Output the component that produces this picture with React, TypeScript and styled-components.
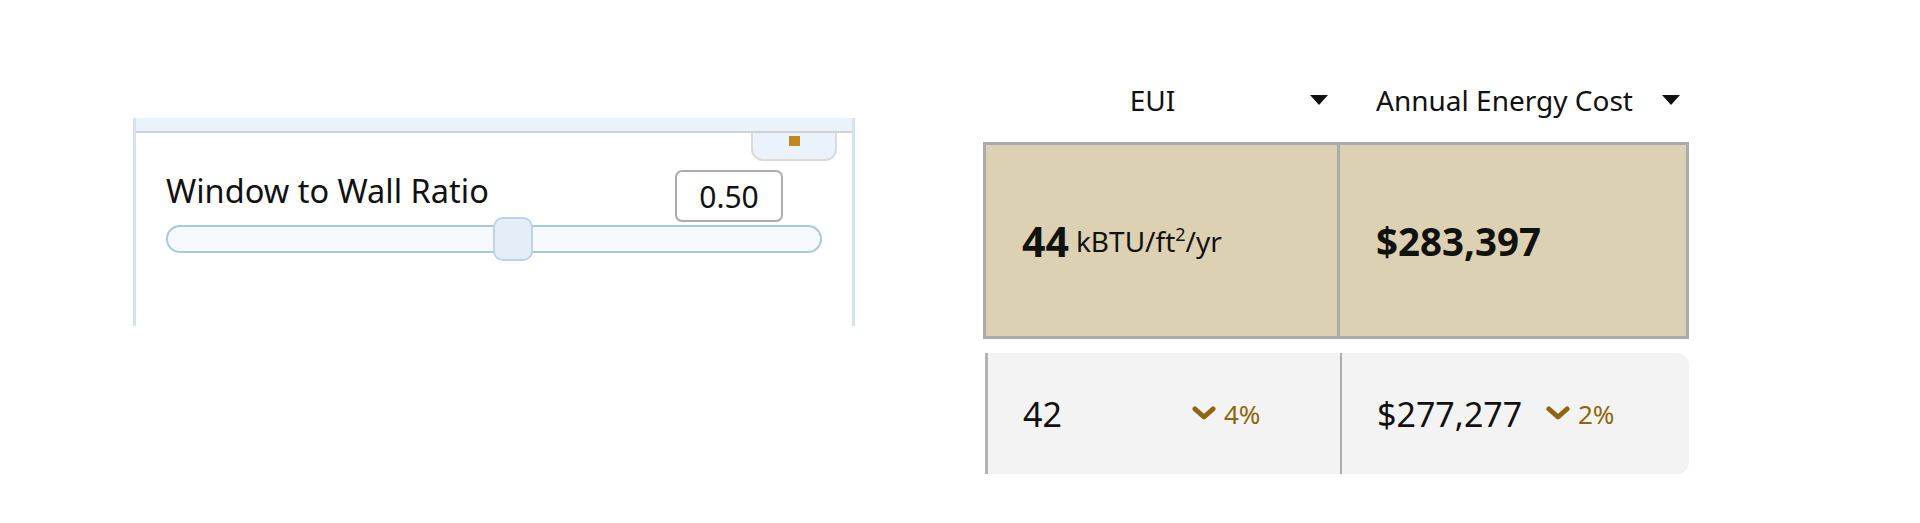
import React from 'react';
import styled, { createGlobalStyle } from 'styled-components';

const GlobalStyle = createGlobalStyle`
  body {
    margin: 0;
    background: #ffffff;
    font-family: 'Noto Sans', 'Open Sans', sans-serif;
    color: #111111;
  }
`;

const RATIO = 0.5;
const RATIO_MAX = 0.95;
const TRACK_INNER = 617;

const Page = styled.div`
  display: flex;
  align-items: flex-start;
  padding: 76px 0 0 133px;
  height: 523px;
  box-sizing: border-box;
`;

const Panel = styled.div`
  width: 722px;
  height: 208px;
  margin-top: 42px;
  box-sizing: border-box;
  border-left: 3px solid #d4e3f4;
  border-right: 3px solid #d4e3f4;
  display: flex;
  flex-direction: column;
`;

const Band = styled.div`
  height: 13px;
  background: #eaf2fb;
  border-bottom: 2px solid #d2d2d2;
`;

const TabRow = styled.div`
  display: flex;
  justify-content: flex-end;
  padding-right: 15px;
`;

const Tab = styled.div`
  width: 86px;
  height: 28px;
  box-sizing: border-box;
  background: #eaf2fb;
  border: 2px solid #dadada;
  border-top: none;
  border-radius: 0 0 12px 12px;
  display: flex;
  justify-content: center;
  padding-top: 3px;
`;

const TabMark = styled.span`
  width: 11px;
  height: 10px;
  background: #c0871a;
`;

const ControlHead = styled.div`
  display: flex;
  justify-content: space-between;
  align-items: flex-start;
  padding: 9px 69px 0 30px;
`;

const Label = styled.div`
  font-size: 32.5px;
  line-height: 42px;
  margin-top: 0;
`;

const ValueBox = styled.div`
  width: 108px;
  height: 52px;
  box-sizing: border-box;
  border: 2px solid #ababab;
  border-radius: 7px;
  background: #ffffff;
  font-size: 30px;
  display: flex;
  align-items: center;
  justify-content: center;
`;

const Track = styled.div`
  position: relative;
  margin: 3px 30px 0 30px;
  height: 28px;
  box-sizing: border-box;
  border: 2px solid #a9c8e3;
  border-radius: 14px;
  background: #f7fafd;
`;

const Thumb = styled.div`
  position: absolute;
  top: -10px;
  width: 40px;
  height: 44px;
  box-sizing: border-box;
  border: 2px solid #bcd3ea;
  border-radius: 10px;
  background: #e3eef9;
`;

const Results = styled.div`
  width: 706px;
  margin-left: 128px;
  display: flex;
  flex-direction: column;
`;

const HeadRow = styled.div`
  display: grid;
  grid-template-columns: 354px 352px;
  height: 48px;
  align-items: center;
`;

const HeadCell = styled.div`
  display: flex;
  align-items: center;
  padding-right: 9px;
`;

const HeadText = styled.span<{ $shift: number }>`
  flex: 1;
  text-align: center;
  font-size: 28px;
  padding-left: ${(p) => p.$shift}px;
`;

const BaseBox = styled.div`
  margin-top: 18px;
  height: 197px;
  box-sizing: border-box;
  background: #ddd1b3;
  border: 3px solid #ababab;
  display: grid;
  grid-template-columns: 351px 1fr;
`;

const BaseCell = styled.div<{ $divider?: boolean }>`
  display: flex;
  align-items: center;
  padding-left: 36px;
  border-left: ${(p) => (p.$divider ? '3px solid #ababab' : 'none')};
`;

const BigNum = styled.span<{ $size: number }>`
  font-size: ${(p) => p.$size}px;
  font-weight: 700;
`;

const Unit = styled.span`
  font-size: 28px;
  margin-left: 7px;
  & sup {
    font-size: 18px;
    vertical-align: 11px;
    line-height: 0;
  }
`;

const AltRow = styled.div`
  margin-top: 14px;
  margin-left: 2px;
  height: 121px;
  box-sizing: border-box;
  background: #f3f3f3;
  border-left: 3px solid #b3b3b3;
  border-radius: 0 12px 12px 0;
  display: grid;
  grid-template-columns: 352px 1fr;
`;

const AltCell = styled.div<{ $divider?: boolean }>`
  display: flex;
  align-items: center;
  padding-left: 35px;
  border-left: ${(p) => (p.$divider ? '2px solid #acacac' : 'none')};
`;

const AltValue = styled.span`
  font-size: 34px;
  min-width: 169px;
`;

const Delta = styled.span`
  display: flex;
  align-items: center;
  gap: 8px;
  color: #8e6610;
  font-size: 26px;
`;

const Caret = () => (
  <svg width="18" height="10" viewBox="0 0 18 10">
    <polygon points="0,0 18,0 9,10" fill="#111" />
  </svg>
);

const Chevron = () => (
  <svg width="24" height="15" viewBox="0 0 24 15">
    <polyline
      points="3,3 12,11 21,3"
      fill="none"
      stroke="#8e6610"
      strokeWidth="5"
      strokeLinecap="round"
      strokeLinejoin="round"
    />
  </svg>
);

const App: React.FC = () => {
  const thumbLeft = (RATIO / RATIO_MAX) * TRACK_INNER;

  return (
    <>
      <GlobalStyle />
      <Page>
        <Panel>
          <Band />
          <TabRow>
            <Tab>
              <TabMark />
            </Tab>
          </TabRow>
          <ControlHead>
            <Label>Window to Wall Ratio</Label>
            <ValueBox>{RATIO.toFixed(2)}</ValueBox>
          </ControlHead>
          <Track>
            <Thumb style={{ left: thumbLeft }} />
          </Track>
        </Panel>
        <Results>
          <HeadRow>
            <HeadCell>
              <HeadText $shift={12}>EUI</HeadText>
              <Caret />
            </HeadCell>
            <HeadCell>
              <HeadText $shift={10}>Annual Energy Cost</HeadText>
              <Caret />
            </HeadCell>
          </HeadRow>
          <BaseBox>
            <BaseCell>
              <BigNum $size={41}>44</BigNum>
              <Unit>
                kBTU/ft<sup>2</sup>/yr
              </Unit>
            </BaseCell>
            <BaseCell $divider>
              <BigNum $size={38.5}>$283,397</BigNum>
            </BaseCell>
          </BaseBox>
          <AltRow>
            <AltCell>
              <AltValue>42</AltValue>
              <Delta>
                <Chevron />
                4%
              </Delta>
            </AltCell>
            <AltCell $divider>
              <AltValue>$277,277</AltValue>
              <Delta>
                <Chevron />
                2%
              </Delta>
            </AltCell>
          </AltRow>
        </Results>
      </Page>
    </>
  );
};

export default App;
